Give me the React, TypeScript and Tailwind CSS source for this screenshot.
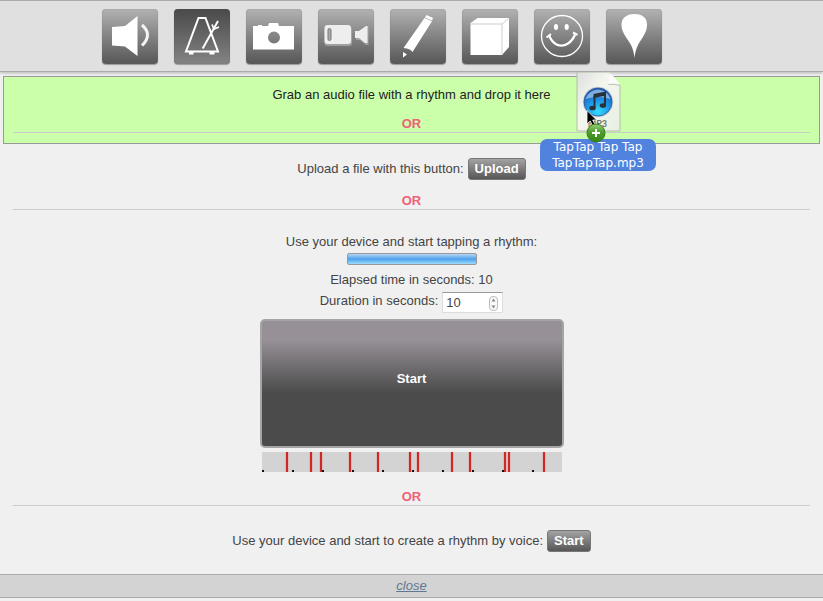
import type { ReactNode } from "react";

const SMALL_BUTTON =
  "h-[22px] rounded-[3px] border border-[#777] bg-linear-to-b from-[#a3a3a3] to-[#575757] px-1.5 text-[13px] leading-5 font-bold text-white";

function SpeakerIcon() {
  return (
    <svg viewBox="0 0 56 56" className="size-14" aria-hidden="true">
      <path d="M10 18 23 17 35.500 7v40L23 37.500 10 36.500Z" fill="#fff" />
      <path d="M40 16q11 9.500 0 20.500" fill="none" stroke="#f4f4f4" strokeWidth="3" />
    </svg>
  );
}

function MetronomeIcon() {
  return (
    <svg viewBox="0 0 56 56" className="size-14" fill="none" stroke="#fff" aria-hidden="true">
      <path d="M24.500 9h7L44 42.500H12L24.500 9Z" strokeWidth="2" />
      <path d="M15 44h4.500m16 0h5" strokeWidth="3" />
      <path d="M28.700 39.500 44 12" strokeWidth="2" />
      <path d="m38 15.500 2 4.500 5-2" strokeWidth="1.800" />
    </svg>
  );
}

function CameraIcon() {
  return (
    <svg viewBox="0 0 56 56" className="size-14" aria-hidden="true">
      <path
        fill="#fff"
        fillRule="evenodd"
        d="M7 17h5v-1h4v1h6l1-3h9l1 3h15v23.500H7Zm21 5.500a6 6 0 1 0 0 12 6 6 0 0 0 0-12Z"
      />
    </svg>
  );
}

function VideoIcon() {
  return (
    <svg viewBox="0 0 56 56" className="size-14" aria-hidden="true">
      <g fill="#bbb" opacity="0.600">
        <rect x="6.500" y="17.500" width="27.500" height="19.500" rx="3" />
        <path d="m38 23 4-1 7-5h1.500v19H48l-6-5h-4Z" />
      </g>
      <g fill="#eee">
        <rect x="6.500" y="16" width="26.500" height="19" rx="3" />
        <path d="M37 22h4l7-5h1.500v17H47l-6-5h-4Z" />
      </g>
      <rect x="10" y="19.500" width="3" height="12" rx="1.500" fill="#aaa" stroke="#777" strokeWidth="1" />
    </svg>
  );
}

function PencilIcon() {
  return (
    <svg viewBox="0 0 56 56" className="size-14" fill="#fff" aria-hidden="true">
      <path d="m35 8.500 1.500-2.500 6.500 3-1 2.500Z" />
      <path d="m34.500 9 7.500 3.200L22.500 43q-2-3.500-9-4Z" />
      <path d="m13 43 4 2.500-4 3Z" />
    </svg>
  );
}

function BoxIcon() {
  return (
    <svg viewBox="0 0 56 56" className="size-14" aria-hidden="true">
      <path d="m8.500 14 7-5H47v29l-7 8H8.500Z" fill="#fff" />
      <path d="M9 15h31v31M40 15l6.500-5.500" fill="none" stroke="#ccc" strokeWidth="1" />
    </svg>
  );
}

function SmileIcon() {
  return (
    <svg viewBox="0 0 56 56" className="size-14" fill="none" stroke="#fff" aria-hidden="true">
      <circle cx="28" cy="27" r="20.500" strokeWidth="1.300" />
      <ellipse cx="22" cy="18" rx="2.100" ry="3" fill="#fff" stroke="none" />
      <ellipse cx="32.700" cy="18" rx="2.100" ry="3" fill="#fff" stroke="none" />
      <path d="M15 26.500q3 7 8 9.200 5.500 2.300 11-1.200 5-3.500 7-9" strokeWidth="2.200" />
      <path d="m12.500 28.500 4.500-3.500M39 23.500l4.500 2.300" strokeWidth="2" />
    </svg>
  );
}

function PinIcon() {
  return (
    <svg viewBox="0 0 56 56" className="size-14" aria-hidden="true">
      <path
        d="M15.500 16C15.500 9 20 5 28.500 5S41 9 41 16c0 8-6 14-9 20-2 4-3 8-3.500 13-.5-5-1.500-9-3.500-13-3-6-9.500-12-9.500-20Z"
        fill="#fff"
      />
    </svg>
  );
}

const TOOLS: { label: string; icon: ReactNode; active?: boolean }[] = [
  { label: "Sound", icon: <SpeakerIcon /> },
  { label: "Rhythm", icon: <MetronomeIcon />, active: true },
  { label: "Photo", icon: <CameraIcon /> },
  { label: "Video", icon: <VideoIcon /> },
  { label: "Draw", icon: <PencilIcon /> },
  { label: "Object", icon: <BoxIcon /> },
  { label: "Mood", icon: <SmileIcon /> },
  { label: "Place", icon: <PinIcon /> },
];

const BEATS = [24, 48, 58, 87, 115, 147, 155, 189, 207, 242, 246, 281];
const SECONDS = [0, 30, 60, 90, 120, 150, 180, 210, 240, 270];

function OrDivider() {
  return (
    <div className="mx-[13px] h-[17px] border-b border-[#ccc] text-center leading-4 font-bold text-[#f06078]">
      OR
    </div>
  );
}

function BeatTrack() {
  return (
    <svg viewBox="0 0 300 20" className="mt-1 h-5 w-[300px] bg-[#d3d3d3]" role="img" aria-label="Recorded beats">
      {BEATS.map((x) => (
        <g key={x}>
          <rect x={x - 0.5} width="3" height="20" fill="#dda5a3" />
          <rect x={x} width="2" height="20" fill="#cf2925" />
        </g>
      ))}
      {SECONDS.map((x) => (
        <rect key={x} x={x} y="18" width="2" height="2" fill="#111" />
      ))}
    </svg>
  );
}

function DraggedFile() {
  return (
    <div className="pointer-events-none absolute top-[-5px] left-[536px] flex w-[116px] flex-col items-center">
      <svg viewBox="0 0 48 67" className="h-[67px] w-12" aria-hidden="true">
        <defs>
          <radialGradient id="disc" cx="50%" cy="85%" r="85%">
            <stop offset="0" stopColor="#35dcff" />
            <stop offset="0.5" stopColor="#1c94e8" />
            <stop offset="1" stopColor="#1d50a4" />
          </radialGradient>
          <linearGradient id="sheet" x1="0" y1="0" x2="1" y2="1">
            <stop offset="0" stopColor="#dedede" />
            <stop offset="0.4" stopColor="#f4f7ef" />
            <stop offset="1" stopColor="#e8efe1" />
          </linearGradient>
          <linearGradient id="plus" x1="0" y1="0" x2="0" y2="1">
            <stop offset="0" stopColor="#9bce7c" />
            <stop offset="0.45" stopColor="#4d9e2c" />
            <stop offset="1" stopColor="#348812" />
          </linearGradient>
        </defs>
        <g transform="translate(1 0)">
          <path d="M2 0h31q3 9 12 13v46H2Z" fill="url(#sheet)" stroke="#b2bea8" strokeWidth="1" />
          <path d="M33 0q1.500 5 .5 12.500 6.500-1 12 1.500Q42 6 33 0Z" fill="#fbfcf9" />
          <path d="M33.500 12.500q6.500-1 11.500 1" fill="none" stroke="#b5beac" strokeWidth="1" />
          <text x="32" y="55" textAnchor="end" fontSize="9" fontWeight="bold" fill="#6b746a" fontFamily="Lato, sans-serif">
            MP3
          </text>
          <circle cx="23" cy="30" r="15.200" fill="#c4ced6" />
          <circle cx="23" cy="30" r="14" fill="url(#disc)" stroke="#2c589a" strokeWidth="0.800" />
          <path d="M10.500 27a13 13 0 0 1 25 0q-12.500-4-25 0Z" fill="#b4d1f2" opacity="0.650" />
          <path d="M19.500 24v12M30 21v12" stroke="#2a3038" strokeWidth="2" />
          <path d="M18.500 22 31 19.500v4L18.500 26Z" fill="#2a3038" />
          <ellipse cx="17.500" cy="36" rx="3.200" ry="2.300" fill="#2a3038" />
          <ellipse cx="28" cy="33.500" rx="3.200" ry="2.300" fill="#2a3038" />
          <path d="M12 38.500V52l3.200-3 2.500 5 2.500-1.200-2.500-4.800h4Z" fill="#000" stroke="#fff" strokeWidth="0.800" />
        </g>
      </svg>
      <div className="w-full rounded-[7px] bg-[#5082de] px-2 text-center font-['DejaVu_Sans',sans-serif] text-[12px] leading-4 text-white">
        TapTap Tap Tap
        <br />
        TapTapTap.mp3
      </div>
      <svg viewBox="0 0 20 20" className="absolute top-[51px] left-[46px] size-5" aria-hidden="true">
        <circle cx="10" cy="10" r="9" fill="url(#plus)" stroke="#3a7c20" strokeWidth="1" />
        <path d="M10 6v8M6 10h8" stroke="#fff" strokeWidth="2" />
      </svg>
    </div>
  );
}

export default function App() {
  return (
    <div className="min-h-screen bg-[#f0f0f0] font-['Liberation_Sans',Arial,sans-serif] text-[13px] leading-4 text-[#444]">
      <header className="relative flex h-[72px] justify-center gap-4 border-y border-[#aaa] bg-[#e0e0e0] pt-2 pr-[60px] shadow-[0_1px_3px_rgba(0,0,0,0.25)]">
        {TOOLS.map((tool) => (
          <button
            key={tool.label}
            type="button"
            aria-label={tool.label}
            aria-pressed={!!tool.active}
            className={
              tool.active
                ? "h-[55px] w-14 shrink-0 rounded-[4px] bg-linear-to-b from-[#4a4a4a] to-[#848484] shadow-[inset_0_0_1px_#555,0_1px_1px_#999]"
                : "h-[55px] w-14 shrink-0 rounded-[4px] bg-linear-to-b from-[#b2b2b2] to-[#575757] shadow-[inset_0_0_1px_#777,0_1px_1px_#999]"
            }
          >
            {tool.icon}
          </button>
        ))}
      </header>

      <main>
        <section className="relative mx-[3px] mt-1 h-[68px] border border-[#999] bg-[#ccffaa]">
          <p className="pt-2.5 text-center leading-4 text-[#222]">Grab an audio file with a rhythm and drop it here</p>
          <div className="-mx-1 mt-[13px]">
            <OrDivider />
          </div>
          <DraggedFile />
        </section>

        <section className="mt-3.5 flex items-center justify-center gap-1">
          <label htmlFor="upload">Upload a file with this button:</label>
          <button id="upload" type="button" className={SMALL_BUTTON}>
            Upload
          </button>
        </section>

        <div className="mt-[13px]">
          <OrDivider />
        </div>

        <section className="mt-6 flex flex-col items-center">
          <label htmlFor="progress">Use your device and start tapping a rhythm:</label>
          <progress
            id="progress"
            value={10}
            max={10}
            className="mt-[3px] h-3 w-[130px] appearance-none overflow-hidden rounded-[2px] border border-[#999] [&::-webkit-progress-bar]:bg-white [&::-webkit-progress-value]:bg-linear-to-b [&::-webkit-progress-value]:from-[#b5d5f5] [&::-webkit-progress-value]:via-[#4ba1ec] [&::-webkit-progress-value]:to-[#9bdcff]"
          />
          <p className="mt-[7px]">Elapsed time in seconds: 10</p>
          <div className="mt-1 flex gap-1">
            <label htmlFor="duration" className="pt-px">
              Duration in seconds:
            </label>
            <div className="relative">
              <input
                id="duration"
                type="number"
                defaultValue={10}
                className="block h-[21px] w-[61px] [appearance:textfield] border border-[#ddd] border-t-[#999] bg-white pl-[3px] leading-4 [&::-webkit-inner-spin-button]:appearance-none"
              />
              <svg viewBox="0 0 9 15" className="pointer-events-none absolute top-1 right-[5px] h-[15px] w-[9px]" aria-hidden="true">
                <rect x="0.500" y="0.500" width="8" height="14" rx="3.500" fill="#fafafa" stroke="#bbb" />
                <path d="M2.500 5.500 4.500 2.500l2 3ZM2.500 9.500l2 3 2-3Z" fill="#888" />
              </svg>
            </div>
          </div>
          <button
            type="button"
            className="mt-1.5 h-[129px] w-[304px] rounded-[5px] border-2 border-[#a5a5a5] bg-linear-to-b from-[#979197] from-15% to-[#4b4b4b] to-58% pb-2.5 font-bold text-white"
          >
            Start
          </button>
          <BeatTrack />
        </section>

        <div className="mt-[17px]">
          <OrDivider />
        </div>

        <section className="mt-6 flex items-center justify-center gap-1">
          <label htmlFor="voice">Use your device and start to create a rhythm by voice:</label>
          <button id="voice" type="button" className={SMALL_BUTTON}>
            Start
          </button>
        </section>
      </main>

      <footer className="mt-[22px] h-6 border-y border-[#aaa] bg-[#d3d3d3] pt-[3px] text-center">
        <a href="#close" className="text-[#5f7891] italic underline">
          close
        </a>
      </footer>
    </div>
  );
}
